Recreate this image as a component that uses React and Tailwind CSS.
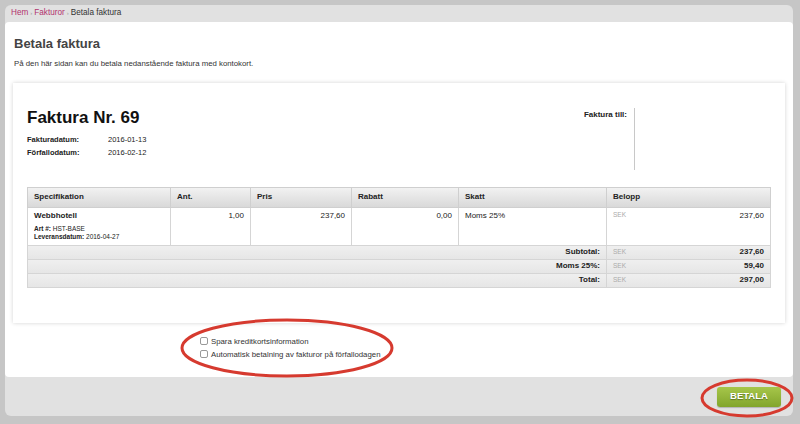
import React from 'react'

const font = { fontFamily: '"Liberation Sans", Arial, Helvetica, sans-serif' }

function Crumb() {
  return (
    <div className="h-[17px] flex items-center px-[6px] text-[8.2px] text-[#333]">
      <span className="text-[#b2336e]">Hem</span>
      <span className="mx-[2px] text-[6px] text-[#999]">›</span>
      <span className="text-[#b2336e]">Fakturor</span>
      <span className="mx-[2px] text-[6px] text-[#999]">›</span>
      <span>Betala faktura</span>
    </div>
  )
}

const cols = ['w-[143px]', 'w-[80px]', 'w-[101px]', 'w-[107px]', 'w-[148px]', '']

function InvoiceTable() {
  const head = ['Specifikation', 'Ant.', 'Pris', 'Rabatt', 'Skatt', 'Belopp']
  const totals = [
    ['Subtotal:', '237,60'],
    ['Moms 25%:', '59,40'],
    ['Total:', '297,00'],
  ]
  return (
    <table className="w-full border-collapse text-[8px] text-[#222]">
      <thead>
        <tr className="h-[20px] bg-gradient-to-b from-[#f3f3f3] to-[#d9d9d9]">
          {head.map((h, i) => (
            <th key={i} className={`${cols[i]} border border-[#cfcfcf] px-[6px] text-left font-bold`}>{h}</th>
          ))}
        </tr>
      </thead>
      <tbody>
        <tr className="h-[38px] align-top">
          <td className="border border-[#d5d5d5] px-[6px] pt-[2px]">
            <div className="font-bold text-[8px]">Webbhotell</div>
            <div className="mt-[3px] text-[6.5px] leading-[8px]"><b>Art #:</b> HST-BASE</div>
            <div className="text-[6.5px] leading-[8px]"><b>Leveransdatum:</b> 2016-04-27</div>
          </td>
          <td className="border border-[#d5d5d5] px-[6px] pt-[2px] text-right">1,00</td>
          <td className="border border-[#d5d5d5] px-[6px] pt-[2px] text-right">237,60</td>
          <td className="border border-[#d5d5d5] px-[6px] pt-[2px] text-right">0,00</td>
          <td className="border border-[#d5d5d5] px-[6px] pt-[2px]">Moms 25%</td>
          <td className="border border-[#d5d5d5] px-[6px] pt-[2px]">
            <div className="flex justify-between">
              <span className="text-[6.5px] text-[#aaa]">SEK</span>
              <span>237,60</span>
            </div>
          </td>
        </tr>
        {totals.map(([label, val], i) => (
          <tr key={i} className="h-[14px] bg-gradient-to-b from-[#f0f0f0] to-[#e6e6e6]">
            <td colSpan={5} className="border border-[#d5d5d5] px-[6px] text-right font-bold">{label}</td>
            <td className="border border-[#d5d5d5] px-[6px]">
              <div className="flex justify-between items-center">
                <span className="text-[6.5px] text-[#aaa]">SEK</span>
                <span className="font-bold">{val}</span>
              </div>
            </td>
          </tr>
        ))}
      </tbody>
    </table>
  )
}

export default function App() {
  return (
    <div style={font} className="relative w-[800px] h-[424px] overflow-hidden bg-[#c6c6c6] pt-[5px] pl-[5px] pr-[7px]">
      <div className="h-[411px] rounded-[6px] bg-[#e1e1e1] flex flex-col overflow-hidden">
        <Crumb />
        <div className="h-[355px] bg-white rounded-[4px] px-[8px] pt-[14px]">
          <h1 className="pl-[1px] text-[13px] font-bold text-[#444] leading-[15px]">Betala faktura</h1>
          <p className="pl-[1px] mt-[7px] text-[7.8px] text-[#333]">På den här sidan kan du betala nedanstående faktura med kontokort.</p>

          <div className="mt-[13px] h-[240px] bg-white shadow-[0_0_4px_rgba(0,0,0,0.18)] px-[14px] pt-[25px]">
            <div className="flex h-[79px]">
              <div className="flex-1">
                <h2 className="text-[17px] font-bold text-[#111] leading-[20px]">Faktura Nr. 69</h2>
                <div className="mt-[5px] grid grid-cols-[81px_1fr] text-[7.5px] leading-[13px] text-[#222]">
                  <span className="font-bold">Fakturadatum:</span><span>2016-01-13</span>
                  <span className="font-bold">Förfallodatum:</span><span>2016-02-12</span>
                </div>
              </div>
              <div className="flex items-start">
                <span className="mt-[1px] text-[8px] font-bold text-[#222]">Faktura till:</span>
                <div className="ml-[7px] h-[62px] w-px bg-[#c8c8c8]" />
                <div className="w-[136px]" />
              </div>
            </div>
            <InvoiceTable />
          </div>

          <div className="mt-[12px] pl-[187px] text-[7.8px] text-[#333] leading-[13px]">
            <label className="flex items-center gap-[3px]">
              <span className="w-[8px] h-[8px] rounded-[2px] border border-[#999] bg-white" />
              Spara kreditkortsinformation
            </label>
            <label className="flex items-center gap-[3px]">
              <span className="w-[8px] h-[8px] rounded-[2px] border border-[#999] bg-white" />
              Automatisk betalning av fakturor på förfallodagen
            </label>
          </div>
        </div>
        <div className="flex-1 flex items-center justify-end pr-[12px]">
          <button className="w-[64px] h-[20px] rounded-[3px] bg-gradient-to-b from-[#a6c64a] to-[#82a52b] text-white text-[9.5px] font-bold [text-shadow:0_1px_1px_rgba(0,0,0,0.35)] shadow-[0_1px_1px_rgba(0,0,0,0.2)]">
            BETALA
          </button>
        </div>
      </div>

      <svg className="absolute left-0 top-0 pointer-events-none" width="800" height="424">
        <ellipse cx="287" cy="348" rx="105" ry="28" fill="none" stroke="#d63a2f" strokeWidth="3" />
        <ellipse cx="747" cy="398" rx="45" ry="18" fill="none" stroke="#d63a2f" strokeWidth="3" />
      </svg>
    </div>
  )
}
